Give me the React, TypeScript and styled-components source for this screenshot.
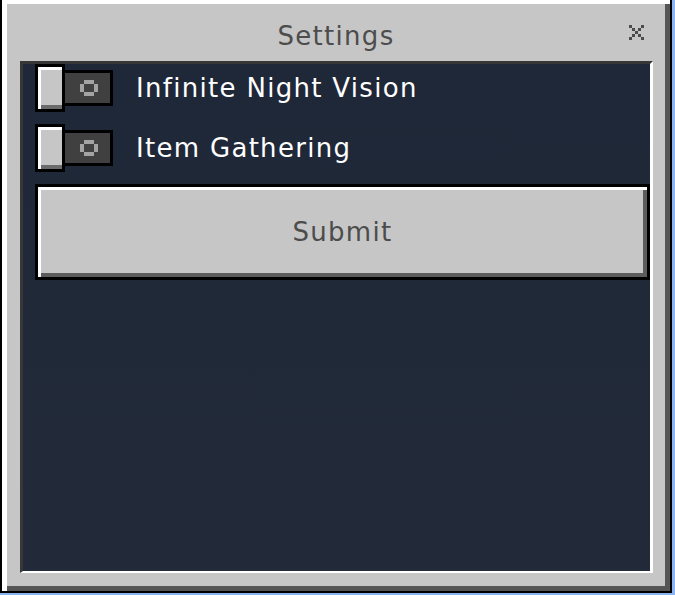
import React, { FC } from "react";
import styled, { createGlobalStyle } from "styled-components";

const GlobalStyle = createGlobalStyle`
  html, body {
    margin: 0;
    padding: 0;
    background: #8db4f2;
  }
  body {
    font-family: "DejaVu Sans", "Liberation Sans", sans-serif;
  }
  * {
    box-sizing: border-box;
  }
`;

interface Setting {
  id: string;
  label: string;
}

const settings: Setting[] = [
  { id: "nightVision", label: "Infinite Night Vision" },
  { id: "itemGathering", label: "Item Gathering" },
];

const CloseIcon: FC = () => (
  <svg width="15" height="15" viewBox="0 0 15 15" shapeRendering="crispEdges">
    <g fill="#4c4c4c">
      <rect x="0" y="0" width="3" height="3" />
      <rect x="12" y="0" width="3" height="3" />
      <rect x="3" y="3" width="3" height="3" />
      <rect x="9" y="3" width="3" height="3" />
      <rect x="6" y="6" width="3" height="3" />
      <rect x="3" y="9" width="3" height="3" />
      <rect x="9" y="9" width="3" height="3" />
      <rect x="0" y="12" width="3" height="3" />
      <rect x="12" y="12" width="3" height="3" />
    </g>
  </svg>
);

const OffMark: FC = () => (
  <svg width="18" height="16" viewBox="0 0 18 16" shapeRendering="crispEdges">
    <path
      fill="#a3a3a3"
      fillRule="evenodd"
      d="M4 0H14V4H18V12H14V16H4V12H0V4H4Z M4 4V12H14V4Z"
    />
  </svg>
);

const Toggle: FC = () => (
  <ToggleWrap>
    <Knob />
    <Track>
      <OffMark />
    </Track>
  </ToggleWrap>
);

export default function App() {
  return (
    <>
      <GlobalStyle />
      <Window>
        <Header>
          <span />
          <Title>Settings</Title>
          <CloseButton aria-label="Close">
            <CloseIcon />
          </CloseButton>
        </Header>
        <Panel>
          {settings.map((s) => (
            <Row key={s.id}>
              <Toggle />
              <Label>{s.label}</Label>
            </Row>
          ))}
          <SubmitButton type="button">Submit</SubmitButton>
        </Panel>
      </Window>
    </>
  );
}

const Window = styled.div`
  width: 672px;
  height: 593px;
  display: flex;
  flex-direction: column;
  background: #c6c6c6;
  border: 2px solid #000;
  border-top: none;
  box-shadow: inset 5px 4px 0 #ffffff, inset -5px -5px 0 #555555;
`;

const Header = styled.div`
  height: 61px;
  display: grid;
  grid-template-columns: 1fr auto 1fr;
  align-items: start;
  padding-top: 21px;
`;

const Title = styled.h1`
  margin: 0;
  font-size: 26px;
  font-weight: 400;
  line-height: 30px;
  letter-spacing: 1.3px;
  color: #4c4c4c;
`;

const CloseButton = styled.button`
  justify-self: end;
  margin: 4px 26px 0 0;
  padding: 0;
  border: none;
  background: none;
  display: flex;
  cursor: pointer;
`;

const Panel = styled.div`
  flex: 1;
  margin: 0 17px 18px 18px;
  padding: 0 0 0 12px;
  display: flex;
  flex-direction: column;
  gap: 12px;
  border-style: solid;
  border-width: 3px 3px 2px 3px;
  border-color: #373737 #ffffff #ffffff #373737;
  background: linear-gradient(180deg, #1f2838 0%, #222a39 100%);
`;

const Row = styled.div`
  display: flex;
  align-items: center;
  height: 48px;
`;

const ToggleWrap = styled.div`
  display: flex;
  align-items: center;
  flex-shrink: 0;
`;

const Knob = styled.div`
  position: relative;
  z-index: 1;
  width: 30px;
  height: 48px;
  border: 3px solid #000;
  background: #c6c6c6;
  box-shadow: inset 3px 3px 0 #ffffff, inset 0 -4px 0 #6b6b6b;
`;

const Track = styled.div`
  width: 51px;
  height: 36px;
  margin-left: -3px;
  padding-left: 3px;
  border: 3px solid #000;
  background: #404040;
  display: flex;
  align-items: center;
  justify-content: center;
`;

const Label = styled.span`
  margin-left: 23px;
  font-size: 26px;
  line-height: 30px;
  letter-spacing: 1.3px;
  color: #ffffff;
  white-space: nowrap;
`;

const SubmitButton = styled.button`
  align-self: stretch;
  height: 96px;
  padding: 0;
  border: 3px solid #000;
  background: #c6c6c6;
  box-shadow: inset 3px 3px 0 #ffffff, inset -4px -4px 0 #5c5c5c;
  font-family: inherit;
  font-size: 26px;
  line-height: 30px;
  letter-spacing: 1.3px;
  color: #4c4c4c;
  cursor: pointer;
`;
